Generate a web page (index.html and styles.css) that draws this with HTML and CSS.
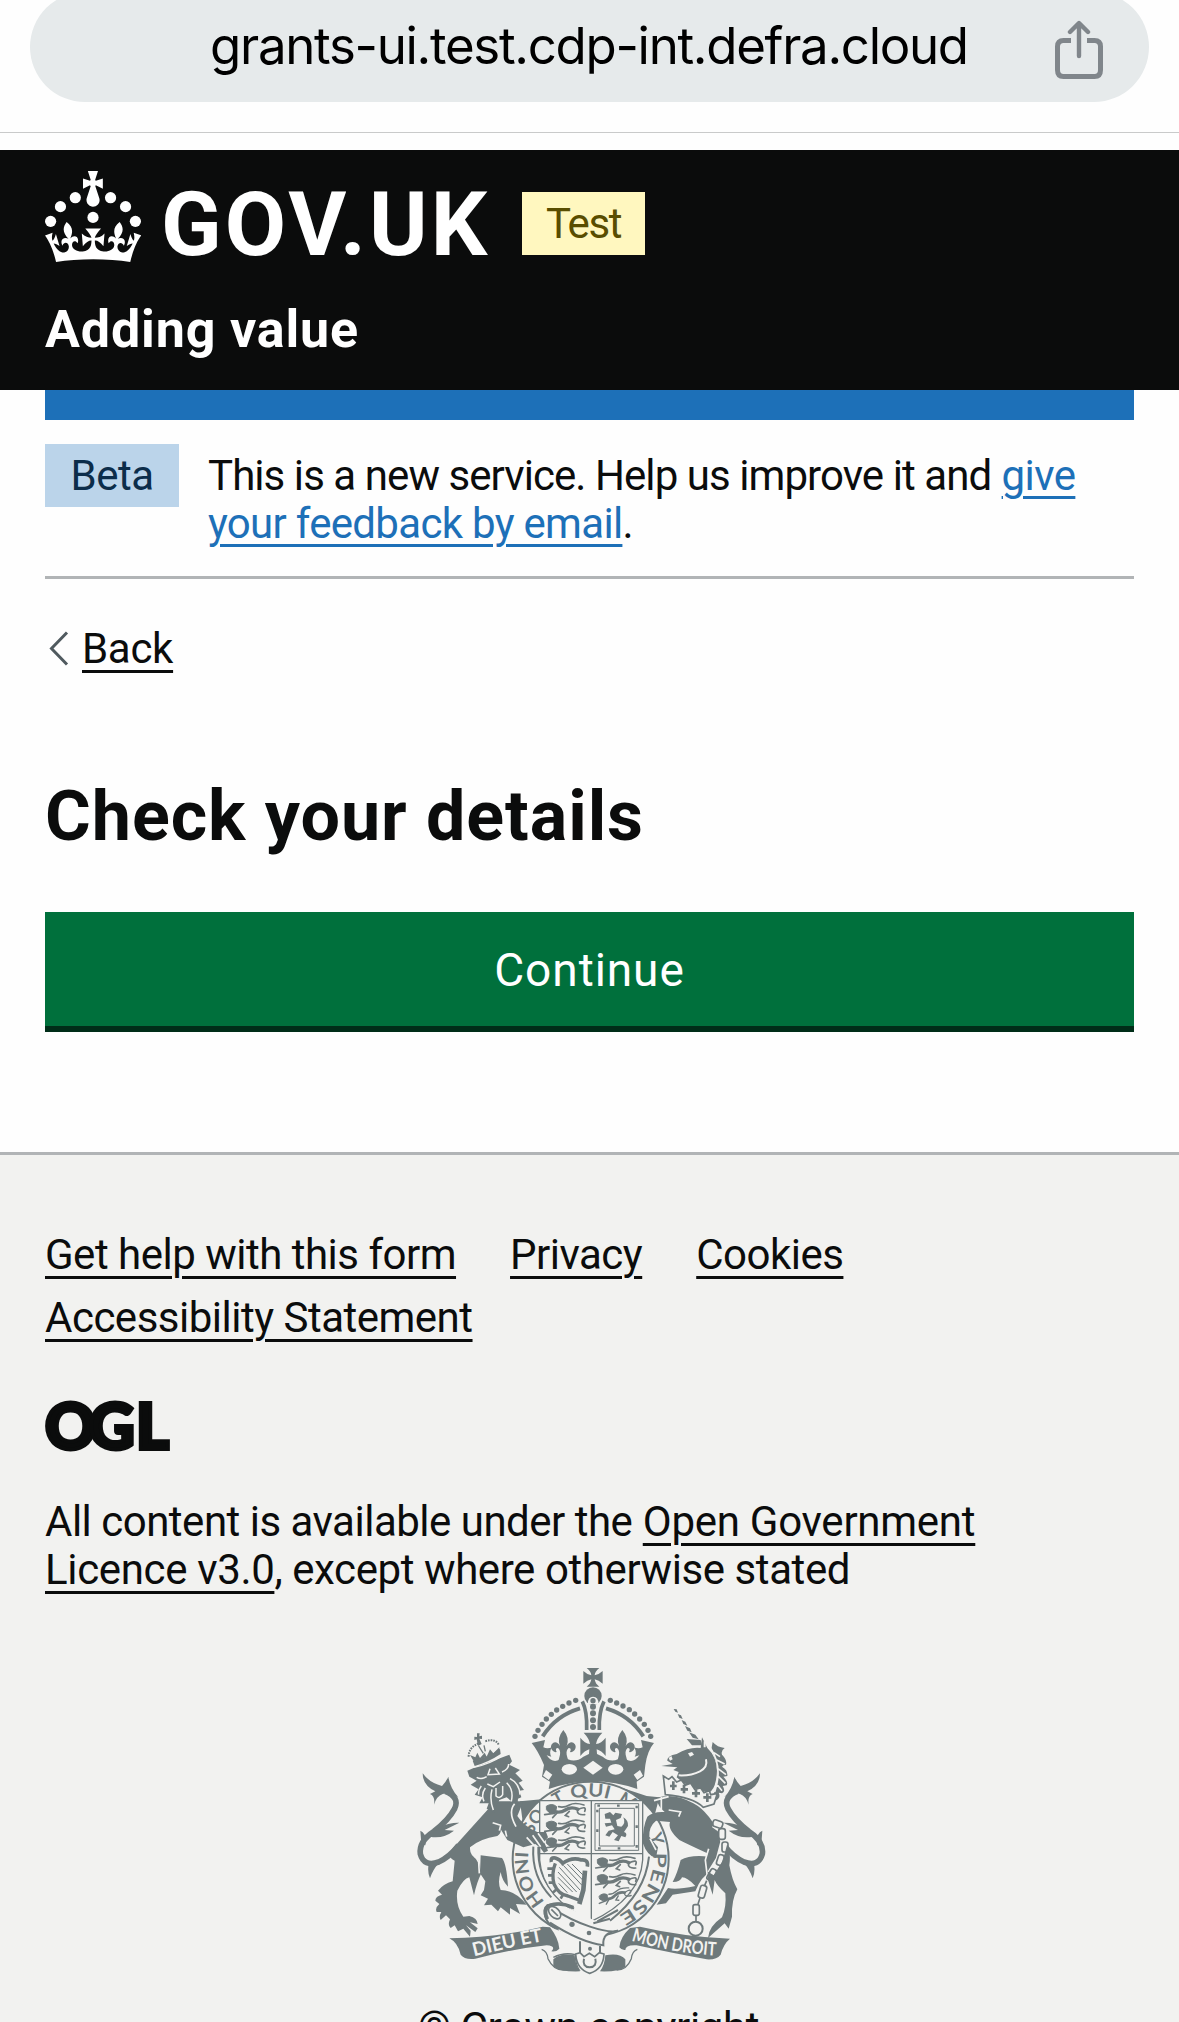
FILE: index.html
```html
<!DOCTYPE html>
<html lang="en">
<head>
<meta charset="utf-8">
<title>Check your details - Adding value - GOV.UK</title>
<link rel="stylesheet" href="styles.css">
</head>
<body>
<div class="browser-bar">
  <div class="address">
    <span class="address-text">grants-ui.test.cdp-int.defra.cloud</span>
    <svg class="share" viewBox="0 0 48 60" fill="none" stroke="#80868b" stroke-width="5" aria-hidden="true">
      <path d="M16 20.500H8.500Q2.500 20.500 2.500 26.500V50Q2.500 56.500 8.500 56.500H39.500Q45.500 56.500 45.500 50V26.500Q45.500 20.500 39.500 20.500H32"/>
      <path d="M24 36V4M15 12L24 3L33 12" stroke-width="4.400" stroke-linecap="round" stroke-linejoin="round"/>
    </svg>
  </div>
</div>

<header class="header">
  <div class="header-top">
    <svg class="crown" viewBox="0 0 63.400 60" fill="#fff" aria-hidden="true">
      <circle cx="20" cy="17.600" r="3.700"/><circle cx="10.200" cy="23.500" r="3.700"/><circle cx="3.700" cy="33.200" r="3.700"/>
      <circle cx="31.700" cy="30.600" r="3.700"/><circle cx="43.300" cy="17.600" r="3.700"/><circle cx="53.200" cy="23.500" r="3.700"/><circle cx="59.700" cy="33.200" r="3.700"/>
      <path d="M33.1,9.8c.2-.1.3-.3.5-.5l4.6,2.4v-6.8l-4.6,1.500c-.1-.2-.3-.3-.5-.5l1.900-5.900h-6.700l1.900,5.900c-.2.1-.3.3-.5.5l-4.600-1.500v6.800l4.600-2.400c.1.2.3.3.5.5l-2.600,8c-.9,2.800,1.200,5.700,4.100,5.700h0c3,0,5.100-2.900,4.100-5.700l-2.600-8ZM37,37.900s-3.400,3.800-4.100,6.100c2.200,0,4.200-.5,6.400-2.800l-.7,8.500c-2-2.800-4.400-4.100-5.700-3.800.1,3.100.5,6.700,5.800,7.200,3.700.3,6.700-1.500,7-3.800.4-2.600-2-4.300-3.700-1.600-1.400-4.500,2.400-6.100,4.900-3.200-1.900-4.500-1.800-7.700,2.400-10.900,3,4,2.600,7.300-1.200,11.100,2.400-1.300,6.200,0,4,4.600-1.200-2.800-3.700-2.200-4.200.2-.3,1.700.7,3.700,3,4.200,1.900.3,4.700-.9,7-5.900-1.300,0-2.400.7-3.900,1.700l2.400-8c.6,2.300,1.400,3.700,2.200,4.500.6-1.600.5-2.800,0-5.300l5,1.800c-2.600,3.600-5.200,8.700-7.300,17.500-7.400-1.100-15.700-1.700-24.500-1.700h0c-8.800,0-17.100.6-24.500,1.700-2.100-8.900-4.700-13.900-7.300-17.500l5-1.800c-.5,2.500-.6,3.700,0,5.300.8-.8,1.600-2.300,2.200-4.500l2.400,8c-1.500-1-2.600-1.700-3.900-1.700,2.300,5,5.200,6.200,7,5.900,2.300-.4,3.300-2.400,3-4.200-.5-2.400-3-3.100-4.200-.2-2.200-4.600,1.600-6,4-4.600-3.700-3.700-4.200-7.100-1.200-11.100,4.200,3.200,4.300,6.400,2.400,10.900,2.500-2.800,6.300-1.300,4.900,3.200-1.800-2.700-4.100-1-3.700,1.600.3,2.300,3.300,4.100,7,3.800,5.400-.5,5.700-4.200,5.800-7.200-1.300-.2-3.700,1-5.700,3.800l-.7-8.500c2.200,2.300,4.200,2.700,6.400,2.800-.7-2.300-4.100-6.100-4.100-6.100h10.600Z"/>
    </svg>
    <span class="wordmark">GOV.UK</span>
    <span class="tag tag-test">Test</span>
  </div>
  <div class="service">Adding value</div>
</header>

<div class="container">
  <div class="blue-bar"></div>
  <div class="phase">
    <span class="tag tag-beta">Beta</span>
    <p class="phase-text"><span class="phase-lead">This is a new service. Help us improve it and</span> <a class="link give" href="#">give</a><br><a class="link feedback" href="#">your feedback by email</a>.</p>
  </div>
  <div class="back">
    <svg class="chevron" viewBox="0 0 20 35" fill="none" stroke="#505a5f" stroke-width="3" aria-hidden="true"><path d="M18 1.500L2.500 17.500L18 33.500"/></svg>
    <a class="back-link" href="#">Back</a>
  </div>
  <main>
    <h1 class="title">Check your details</h1>
    <button class="button" type="button">Continue</button>
  </main>
</div>

<footer class="footer">
  <div class="footer-links">
    <a class="help" href="#">Get help with this form</a>
    <a class="privacy" href="#">Privacy</a>
    <a class="cookies" href="#">Cookies</a>
    <a class="accessibility" href="#">Accessibility Statement</a>
  </div>
  <svg class="ogl" viewBox="0 0 124 52" fill="#0b0c0c" role="img" aria-label="OGL">
    <text class="ogl-text" y="48"><tspan x="0">O</tspan><tspan x="44">G</tspan><tspan x="91">L</tspan></text>
  </svg>
  <p class="licence"><span class="licence-a">All content is available under the</span> <a class="licence-b" href="#">Open Government</a><br><a class="licence-c" href="#">Licence v3.0</a><span class="licence-d">, except where otherwise stated</span></p>
  <div class="crest-block">
    <svg class="crest" viewBox="0 0 1080 960" aria-hidden="true">
      <defs>
        <g id="fleur"><path d="M0 0Q-20 24-10 48Q-18 34-30 38Q-42 46-34 60Q-28 68-20 66Q-26 54-16 54Q-8 60-10 74L-14 90H14L10 74Q8 60 16 54Q26 54 20 66Q28 68 34 60Q42 46 30 38Q18 34 10 48Q20 24 0 0Z"/></g>
        <g id="passant" fill="none" stroke="#6e797b" stroke-linecap="round">
          <path d="M10 8Q26-2 40 10L36 30Q20 34 10 20Z" fill="#6e797b" stroke-width="3"/>
          <path d="M30 22Q48 32 66 20T104 18" stroke-width="10"/>
          <path d="M46 10Q62 14 78 5T122 5M104 18Q132 6 124 24" stroke-width="5"/>
          <path d="M4 34L32 30M42 28L28 43M78 24L66 36L76 40M102 20Q100 36 124 34" stroke-width="5"/>
        </g>
        <g id="tail">
          <path d="M106 394Q150 412 134 446Q116 480 72 514Q26 544 31 582Q42 622 86 606Q118 592 146 556" fill="none" stroke="#6e797b" stroke-width="17"/>
          <path d="M38 340Q58 368 96 378Q108 366 115 350Q120 384 145 412Q120 394 98 402Q80 408 72 434Q76 408 60 402L76 394Q38 376 38 340ZM148 488Q92 486 60 530Q98 538 132 512L104 510ZM31 512Q52 522 46 556L34 552ZM60 655Q50 630 58 606L86 610Q68 630 60 655Z"/>
        </g>
        <path id="garter" d="M542 785A188 188 0 0 1 542 409A188 188 0 0 1 542 785"/>
        <path id="mottoLeft" d="M192 889Q300 862 404 842"/>
        <path id="mottoRight" d="M664 842Q780 878 930 888"/>
      </defs>
      <g fill="#6e797b">
        <!-- shoulders behind the garter -->
        <path d="M330 424L395 418L450 385H640L710 408L748 412L730 480L340 500Z"/>
        <ellipse cx="542" cy="597" rx="234" ry="232" fill="#f2f2f0" stroke="#6e797b" stroke-width="6"/>
        <g class="garter-text">
          <text><textPath href="#garter" startOffset="154" textLength="162" lengthAdjust="spacingAndGlyphs">HONI</textPath></text>
          <text><textPath href="#garter" startOffset="368">SO</textPath></text>
          <text><textPath href="#garter" startOffset="482">T</textPath></text>
          <text><textPath href="#garter" startOffset="532" textLength="114" lengthAdjust="spacingAndGlyphs">QUI</textPath></text>
          <text><textPath href="#garter" startOffset="672">M</textPath></text>
          <text><textPath href="#garter" startOffset="812">Y</textPath></text>
          <text><textPath href="#garter" startOffset="866" textLength="228" lengthAdjust="spacingAndGlyphs">PENSE</textPath></text>
        </g>
        <path d="M370 560Q364 650 424 712M385 560Q382 640 428 694M717 590Q706 700 600 782" fill="none" stroke="#6e797b" stroke-width="6"/>
        <!-- shield -->
        <path d="M389 422H698V600Q690 716 544 784Q398 716 389 600Z" fill="#f2f2f0" stroke="#6e797b" stroke-width="4"/>
        <path d="M544 422V784M389 581H698" stroke="#6e797b" stroke-width="4"/>
        <use href="#passant" x="400" y="430"/><use href="#passant" x="400" y="480"/><use href="#passant" x="400" y="530"/>
        <use href="#passant" x="553" y="590"/><use href="#passant" x="553" y="640"/><use href="#passant" transform="translate(558 704) rotate(-14) scale(.82)"/>
        <g fill="none" stroke="#6e797b" stroke-width="3">
          <path d="M555 431H686V571H555ZM568 445H673V558H568Z"/>
          <path d="M562 437H680V565H562Z" stroke-width="7" stroke-dasharray="8 51"/>
        </g>
        <path d="M584 462L600 456L610 466L616 458L636 462L632 474L618 480L622 498L634 500Q648 490 640 472Q656 482 654 498L642 516Q654 520 646 532L634 528L626 544L612 540L624 526L608 516L598 530L586 526L596 512L614 508L606 496L588 500L584 490L604 488L600 476L586 476Z"/>
        <!-- harp -->
        <g fill="none" stroke="#6e797b">
          <path d="M424 606Q420 592 436 594Q450 598 458 610Q486 590 514 600Q536 598 532 620" stroke-width="11"/>
          <path d="M436 610Q424 640 432 672Q446 704 474 708L506 720" stroke-width="10"/>
          <path d="M525 632L520 690L508 732" stroke-width="14"/>
          <path d="M430 626H412M430 646H414M432 668H416M440 688L428 698M460 702L452 716" stroke-width="8"/>
          <path d="M448 622L510 690M460 616L516 676M472 612L518 660M486 612L520 646M444 636L500 696M444 652L488 696M446 670L472 698" stroke-width="3"/>
        </g>
        <!-- royal crown -->
        <path d="M530 24H568Q555 34 554 46Q566 44 578 33V71Q566 60 554 58Q556 72 568 80H530Q542 72 544 58Q532 60 520 71V33Q532 44 544 46Q543 34 530 24Z"/>
        <circle cx="549" cy="108" r="26"/><path d="M533 132Q534 110 549 110Q565 110 566 132Z" fill="#f2f2f0"/>
        <path d="M398 229Q438 166 510 145M700 229Q660 166 588 145" fill="none" stroke="#6e797b" stroke-width="12"/>
        <path d="M517 124Q532 154 530 210M582 124Q566 156 568 210" fill="none" stroke="#6e797b" stroke-width="11"/>
        <g>
          <circle cx="375" cy="229" r="8"/><circle cx="384" cy="211" r="8"/><circle cx="396" cy="193" r="8"/><circle cx="409" cy="177" r="8"/><circle cx="424" cy="163" r="8"/><circle cx="440" cy="150" r="8"/><circle cx="458" cy="139" r="8"/><circle cx="477" cy="129" r="8"/><circle cx="497" cy="121" r="8"/>
          <circle cx="722" cy="229" r="8"/><circle cx="714" cy="211" r="8"/><circle cx="703" cy="193" r="8"/><circle cx="689" cy="177" r="8"/><circle cx="674" cy="162" r="8"/><circle cx="658" cy="149" r="8"/><circle cx="639" cy="138" r="8"/><circle cx="620" cy="129" r="8"/><circle cx="601" cy="121" r="8"/>
          <circle cx="549" cy="122" r="8"/><circle cx="549" cy="140" r="9"/><circle cx="549" cy="160" r="9"/><circle cx="549" cy="181" r="9"/><circle cx="549" cy="201" r="9"/>
        </g>
        <path d="M365 249L405 240L400 262Q412 268 426 262Q416 276 424 290L410 286Q428 312 450 298L462 288L474 298Q498 308 520 290L549 276L578 290Q600 308 624 298L636 288L648 298Q670 312 688 286L674 290Q682 276 672 262Q686 268 698 262L693 240L732 249Q712 272 706 315L702 350L680 365L682 387Q550 340 416 387L420 365L396 350L402 315Q384 272 365 249Z"/>
        <use href="#fleur" x="460" y="210"/><use href="#fleur" x="637" y="210"/>
        <path d="M521 218H577Q560 236 558 252Q574 250 587 233V288Q574 272 560 268L562 296H536L538 268Q524 272 511 288V233Q524 250 540 252Q538 236 521 218Z"/>
        <g fill="#f2f2f0">
          <ellipse cx="478" cy="328" rx="23" ry="16"/><ellipse cx="617" cy="328" rx="23" ry="16"/><path d="M520 323L549 302L578 323L549 344Z"/>
          <path d="M408 330L427 344L416 360L399 347ZM690 330L671 344L682 360L699 347Z"/>
        </g>
        <!-- lion supporter -->
        <use href="#tail"/>
        <path d="M232 450L124 570Q112 592 134 602L128 664Q100 672 84 692L96 704Q76 708 76 722L88 732Q74 744 80 756L94 756Q86 770 92 780L108 766L120 778Q112 796 122 804L134 796L144 814L160 806L180 830L182 812L168 796L196 816L203 805L180 787L203 792Q202 774 178 768L160 770Q136 738 142 692Q160 656 178 652L192 706Q200 668 214 640L205 600Q178 588 180 562Q210 536 262 528Q274 520 272 508L292 540L318 552L340 562L376 552Q392 562 402 578L414 572L402 546L414 532L408 516L382 516Q342 500 322 468L340 424L260 424Z"/>
        <path d="M212 586L276 594Q290 612 294 680Q276 662 272 636Q262 668 272 690Q314 690 350 734L318 732L330 762L300 744L300 764L272 742L264 754L244 734L222 736L234 716L212 706L222 690L226 664L210 640Z"/>
        <path d="M248 488L272 496L268 512M286 512L290 530M350 532L372 556M368 526L392 560M384 520L404 548M320 425Q290 450 318 500M184 568L206 606L208 640" fill="none" stroke="#f2f2f0" stroke-width="5"/>
        <path d="M172 332L196 322L298 284L306 304L298 314L330 330L316 340L338 362L326 368L342 390L328 392L334 412L324 416L322 438L290 412L268 420L252 458L230 446L236 430L208 430L218 412L194 404L206 388L182 374L200 362L178 350Z"/>
        <path d="M240 326L234 344L268 342L256 324M200 352Q214 360 230 350M276 336Q296 328 296 312M232 372L250 380L270 366M258 384V408Q270 418 278 404V378M226 384Q212 404 222 424M246 388Q238 420 250 450M290 368Q312 390 304 424M300 356Q328 370 330 404M214 378Q204 390 206 404" fill="none" stroke="#f2f2f0" stroke-width="4.500"/>
        <path d="M188 302Q236 292 270 266L272 282Q236 306 194 318Z"/>
        <path d="M192 305L180 285L196 292L202 278L210 294L224 278L230 290L240 268L250 280L268 262L268 276Z"/>
        <path d="M192 322Q240 312 276 288" fill="none" stroke="#f2f2f0" stroke-width="4"/>
        <path d="M176 290Q176 262 206 250M226 244Q256 234 266 254" fill="none" stroke="#6e797b" stroke-width="6" stroke-dasharray="5 3"/>
        <path d="M201 220H209L208 229L216 227V237L208 236L215 252L204 258L200 238L193 240V230L201 231Z"/>
        <path d="M206 258L220 280M222 256L226 274" stroke="#6e797b" stroke-width="4"/>
        <!-- unicorn supporter -->
        <use href="#tail" transform="translate(1088 0) scale(-1 1)"/>
        <path d="M791 147L800 148L804 158L796 155ZM803 162L813 166L818 177L808 173ZM815 180L826 185L832 197L820 192ZM825 198L840 205L845 217L832 212ZM837 217L856 224L866 238L848 233ZM830 237L872 240L876 256L846 256Z"/>
        <path d="M876 232L892 264Q930 300 918 360Q912 392 896 398Q836 386 800 352L806 336L790 330L802 322L754 318L788 312L772 302Q770 288 800 282Q838 260 872 264Z"/>
        <path d="M904 268L908 246Q922 262 944 264Q932 272 936 284Q952 300 948 314Q938 314 936 320Q954 330 952 348L940 350Q956 366 950 376L938 378Q948 394 936 400L926 398Q934 414 916 422L912 400Q938 340 904 268Z"/>
        <path d="M900 262Q940 320 914 396M912 278L930 290M920 300L944 312M924 326L948 344M924 348L946 370M918 370L936 392" fill="none" stroke="#f2f2f0" stroke-width="5"/>
        <path d="M834 280L846 276L852 284L840 290ZM776 294L784 288L788 298L780 302Z" fill="#f2f2f0"/>
        <path d="M806 346Q842 348 870 334Q894 322 888 298M884 262V244" fill="none" stroke="#f2f2f0" stroke-width="6"/>
        <path d="M738 414Q790 396 850 430Q900 456 936 540Q966 560 958 616Q966 660 982 688Q964 720 966 770L956 806L944 790L894 834Q896 800 936 772Q950 740 946 700Q920 676 914 660L908 704L894 660L888 606L892 580Q836 554 808 540Q772 508 780 486L738 482Q716 500 718 530L744 562L738 594Q712 588 698 548Q698 500 712 470Q728 454 764 456Q744 440 738 414Z"/>
        <path d="M896 590Q840 584 812 600Q802 640 788 666Q812 666 816 652Q832 652 856 678Q800 690 774 684L758 708L740 734L768 730L788 704L856 694Q872 650 908 630Z"/>
        <path d="M776 450L812 456L806 470M720 536L738 570M896 566L886 600L892 650M754 410V450M732 422L776 410" fill="none" stroke="#f2f2f0" stroke-width="5"/>
        <path d="M760 348L776 358L786 350L800 366L814 360L826 376L842 370L854 388L872 384L882 398L898 392L902 404L922 400L912 432L880 442Q850 412 766 404Z" fill="#f2f2f0" stroke="#6e797b" stroke-width="5"/>
        <path d="M790 364V390M780 378H800M822 374V400M812 388H834M858 388V412M846 400H870M892 400V426M880 412H904" stroke="#6e797b" stroke-width="8"/>
        <path d="M912 492L934 508L942 546L928 598L902 640" fill="none" stroke="#f2f2f0" stroke-width="22"/>
        <g fill="none" stroke="#6e797b" stroke-width="5">
          <rect x="908" y="482" width="30" height="20" rx="7" transform="rotate(20 923 492)"/>
          <rect x="926" y="506" width="20" height="32" rx="7"/><rect x="936" y="546" width="18" height="30" rx="7"/>
          <rect x="922" y="584" width="18" height="32" rx="7" transform="rotate(18 931 600)"/>
          <rect x="896" y="626" width="18" height="36" rx="7" transform="rotate(30 905 644)"/>
          <rect x="868" y="676" width="19" height="38" rx="7" transform="rotate(16 877 695)"/>
          <rect x="849" y="734" width="19" height="32" rx="6"/>
          <path d="M890 662L884 676M870 714L864 732M858 766V786"/>
          <circle cx="857" cy="806" r="21" stroke-width="6"/>
        </g>
        <!-- belt and motto ribbons -->
        <path d="M408 738Q436 722 476 744L588 798L606 812L580 830L584 858Q500 846 436 806Q404 776 408 738Z" fill="#f2f2f0"/>
        <path d="M492 746Q452 722 412 736Q396 748 408 776Q416 798 446 808M430 746Q480 780 540 800T624 812Q576 816 580 856Q510 846 420 788M510 844V880M570 858V880M562 784L624 750M550 790L600 776" fill="none" stroke="#6e797b" stroke-width="6"/>
        <path d="M490 743Q450 724 414 738Q400 752 412 778" fill="none" stroke="#6e797b" stroke-width="11"/>
        <ellipse cx="434" cy="758" rx="22" ry="14" transform="rotate(45 434 758)" fill="#f2f2f0" stroke="#6e797b" stroke-width="5"/>
        <path d="M424 748L444 768" stroke="#6e797b" stroke-width="5"/>
        <circle cx="486" cy="793" r="8"/><circle cx="537" cy="819" r="7"/><circle cx="540" cy="866" r="6"/>
        <path d="M118 835Q270 832 398 800L420 802Q446 836 448 866Q440 876 424 874Q440 858 410 856Q300 868 196 896Q164 900 152 884Q144 848 118 835Z"/>
        <path d="M960 836Q820 830 690 800L660 804Q630 832 628 862Q636 872 646 870Q646 854 680 856Q790 880 890 898Q920 900 932 884Q940 852 960 836Z"/>
        <path d="M395 868Q412 874 414 896Q430 930 460 930H508Q496 912 496 884Q462 876 430 892" fill="none" stroke="#6e797b" stroke-width="4"/>
        <path d="M430 898Q450 878 494 886Q496 916 510 934Q452 936 430 920ZM646 898Q630 878 586 886Q584 916 570 934Q628 936 646 920Z"/>
        <path d="M682 868Q666 874 664 896Q650 930 620 930" fill="none" stroke="#6e797b" stroke-width="4"/>
        <path d="M497 882L510 878L522 890L538 880L554 890L568 878L582 882Q580 928 539 940Q500 928 497 882Z" fill="#f2f2f0" stroke="#6e797b" stroke-width="5"/>
        <path d="M522 896Q516 920 539 922Q562 920 556 896" fill="none" stroke="#6e797b" stroke-width="6"/>
        <g class="motto-text" fill="#f2f2f0">
          <text><textPath href="#mottoLeft" textLength="212" lengthAdjust="spacingAndGlyphs">DIEU ET</textPath></text>
          <text><textPath href="#mottoRight" textLength="258" lengthAdjust="spacingAndGlyphs">MON DROIT</textPath></text>
        </g>
      </g>
    </svg>
    <div class="copyright">© Crown copyright</div>
  </div>
</footer>
</body>
</html>
```
FILE: styles.css
```css
* { box-sizing: border-box; }
html, body { height: 2022px; overflow: hidden; }
body {
  margin: 0;
  display: flex;
  flex-direction: column;
  background: #fefefe;
  color: #0b0c0c;
  font-family: Roboto, "Noto Sans", sans-serif;
  font-size: 42px;
  line-height: 48px;
}
a { color: inherit; text-decoration: underline; text-decoration-thickness: 3px; text-underline-offset: 7px; }
p, h1 { margin: 0; }
svg { display: block; flex: none; }
span, a, h1, button { white-space: nowrap; }

.browser-bar { height: 150px; flex: none; }
.address { height: 133px; border-bottom: 1px solid #c9caca; position: relative; }
.address::before {
  content: "";
  position: absolute;
  left: 30px; right: 30px; top: -8px;
  height: 110px;
  border-radius: 55px;
  background: #e6eaeb;
}
.address-text {
  position: absolute;
  left: 210px; top: 14px;
  font: 400 51px/64px Inter, sans-serif;
  letter-spacing: -1.3px;
  color: #000;
}
.share { position: absolute; left: 1055px; top: 20px; width: 48px; height: 60px; }

.header { height: 240px; flex: none; background: #0b0c0c; color: #fff; padding: 20px 45px 0; }
.header-top { display: flex; height: 92px; }
.crown { width: 96px; height: 91px; margin-top: 1px; }
.wordmark { width: 381px; padding-left: 20px; font-size: 89px; font-weight: 700; line-height: 110px; letter-spacing: 3.1px; }
.tag { height: 63px; line-height: 63px; text-align: center; flex: none; letter-spacing: -0.5px; }
.tag-test { width: 123px; margin-top: 22px; background: #fff7bf; color: #594d00; letter-spacing: -1.4px; }
.service { font-size: 52px; font-weight: 700; line-height: 60px; margin-top: 38px; letter-spacing: 0.85px; }

.container { margin: 0 45px; height: 762px; flex: none; }
.blue-bar { height: 30px; background: #1d70b8; }
.phase { display: flex; gap: 29px; height: 159px; padding-top: 24px; border-bottom: 3px solid #b1b4b6; }
.tag-beta { width: 134px; background: #bbd4ea; color: #0c2d4a; }
.phase-text { padding-top: 8px; }
.phase-lead { letter-spacing: -0.93px; }
.link { color: #1d70b8; text-underline-offset: 6px; }
.give { letter-spacing: -0.6px; }
.feedback { letter-spacing: -0.7px; }
.back { display: flex; align-items: center; gap: 13px; margin-top: 46px; height: 48px; padding-left: 4px; }
.back-link { letter-spacing: -0.3px; }
.chevron { width: 20px; height: 35px; margin-top: -2px; }
.title { font-size: 70px; font-weight: 700; line-height: 80px; margin-top: 103px; letter-spacing: 0.95px; }
.button {
  display: block;
  width: 100%;
  height: 114px;
  margin-top: 56px;
  padding: 2px 0 0;
  border: 0;
  background: #00703c;
  box-shadow: 0 6px 0 #002d18;
  color: #fff;
  font: 400 46px/112px Roboto, sans-serif;
  letter-spacing: 0.95px;
}

.footer { flex: 1; padding: 76px 45px 0; border-top: 3px solid #b1b4b6; background: #f2f2f0; }
.footer-links { display: flex; flex-wrap: wrap; column-gap: 54px; row-gap: 15px; letter-spacing: -0.5px; }
.ogl { width: 124px; height: 52px; margin-top: 59px; overflow: visible; }
.ogl-text { font: 900 63px Lato, sans-serif; stroke: #0b0c0c; stroke-width: 4px; }
.licence { margin-top: 45px; }
.licence-a { letter-spacing: -0.5px; }
.licence-b { letter-spacing: -0.26px; }
.licence-c { letter-spacing: -0.35px; }
.licence-d { letter-spacing: -0.42px; }
.crest-block { display: flex; flex-direction: column; }
.crest { width: 360px; height: 320px; margin: 66px 0 0 365px; }
.garter-text { font: 700 54px Lato, sans-serif; }
.motto-text { font: 700 56px Lato, sans-serif; }
.copyright { margin: 24px 0 0 373px; white-space: nowrap; letter-spacing: -0.4px; }
```
